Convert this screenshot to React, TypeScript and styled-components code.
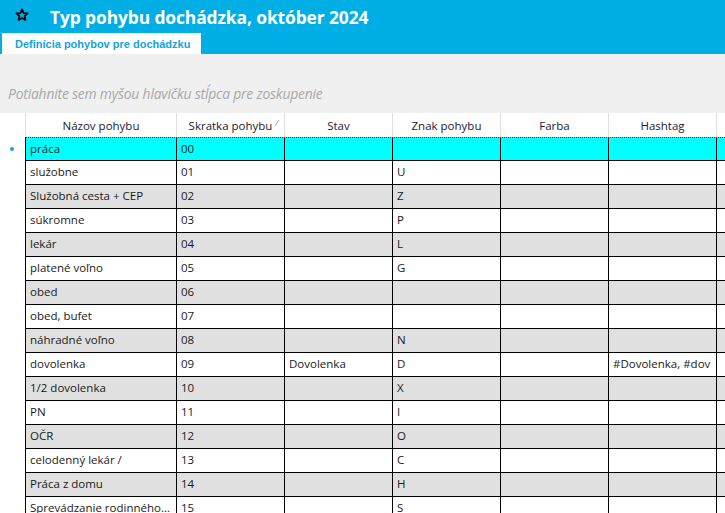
import React from "react";
import styled, { createGlobalStyle } from "styled-components";

const GlobalStyle = createGlobalStyle`
  html, body {
    margin: 0;
    padding: 0;
    background: #ffffff;
    overflow: hidden;
  }
  body {
    font-family: "Open Sans", "Noto Sans", sans-serif;
  }
`;

interface RowData {
  name: string;
  code: string;
  state?: string;
  sign?: string;
  color?: string;
  hashtag?: string;
}

const rows: RowData[] = [
  { name: "práca", code: "00" },
  { name: "služobne", code: "01", sign: "U" },
  { name: "Služobná cesta + CEP", code: "02", sign: "Z" },
  { name: "súkromne", code: "03", sign: "P" },
  { name: "lekár", code: "04", sign: "L" },
  { name: "platené voľno", code: "05", sign: "G" },
  { name: "obed", code: "06" },
  { name: "obed, bufet", code: "07" },
  { name: "náhradné voľno", code: "08", sign: "N" },
  { name: "dovolenka", code: "09", state: "Dovolenka", sign: "D", hashtag: "#Dovolenka, #dov" },
  { name: "1/2 dovolenka", code: "10", sign: "X" },
  { name: "PN", code: "11", sign: "I" },
  { name: "OČR", code: "12", sign: "O" },
  { name: "celodenný lekár /", code: "13", sign: "C" },
  { name: "Práca z domu", code: "14", sign: "H" },
  { name: "Sprevádzanie  rodinného príslušníka", code: "15", sign: "S" },
];

const columns = [
  { title: "Názov pohybu", width: 151 },
  { title: "Skratka pohybu", width: 108, sorted: true },
  { title: "Stav", width: 108 },
  { title: "Znak pohybu", width: 108 },
  { title: "Farba", width: 108 },
  { title: "Hashtag", width: 108 },
  { title: "", width: 108 },
];

const StarIcon = () => (
  <svg width="14" height="14" viewBox="0 0 24 24">
    <path
      d="M12 2.5l2.8 6.2 6.7.6-5.1 4.5 1.5 6.6L12 17l-5.9 3.4 1.5-6.6-5.1-4.5 6.7-.6z"
      fill="none"
      stroke="#000"
      strokeWidth="3"
      strokeLinejoin="round"
    />
  </svg>
);

const App = () => {
  return (
    <Page>
      <GlobalStyle />
      <TitleBar>
        <StarBox>
          <StarIcon />
        </StarBox>
        <Title>Typ pohybu dochádzka, október 2024</Title>
      </TitleBar>
      <TabStrip>
        <Tab>Definícia pohybov pre dochádzku</Tab>
      </TabStrip>
      <GroupPanel>
        <GroupHint>Potiahnite sem myšou hlavičku stĺpca pre zoskupenie</GroupHint>
      </GroupPanel>
      <Grid>
        <HeaderRow>
          <IndicatorCell />
          {columns.map((col, i) => (
            <HeaderCell key={i} $width={col.width}>
              {col.title}
              {col.sorted && (
                <SortMark width="6" height="8" viewBox="0 0 6 8">
                  <line x1="1" y1="7" x2="5" y2="1" stroke="#b0b0b0" strokeWidth="1" />
                </SortMark>
              )}
            </HeaderCell>
          ))}
        </HeaderRow>
        {rows.map((row, index) => {
          const values = [row.name, row.code, row.state, row.sign, row.color, row.hashtag, ""];
          return (
            <Row key={index} $selected={index === 0} $shade={index % 2 === 0}>
              <IndicatorCell>{index === 0 && <Dot />}</IndicatorCell>
              {columns.map((col, i) => (
                <Cell key={i} $width={col.width}>
                  {values[i]}
                </Cell>
              ))}
            </Row>
          );
        })}
      </Grid>
    </Page>
  );
};

export default App;

const Page = styled.div`
  width: 725px;
  height: 513px;
  overflow: hidden;
  background: #ffffff;
`;

const TitleBar = styled.div`
  height: 33px;
  background: #00aee6;
  display: flex;
  align-items: center;
`;

const StarBox = styled.div`
  width: 50px;
  display: flex;
  justify-content: center;
  padding-right: 6px;
  box-sizing: border-box;
  margin-top: -4px;
`;

const Title = styled.h1`
  margin: 0;
  color: #ffffff;
  font-family: "Open Sans", sans-serif;
  font-weight: 700;
  font-size: 17.4px;
  letter-spacing: -0.1px;
`;

const TabStrip = styled.div`
  height: 21px;
  background: #00aee6;
  padding-left: 2px;
  display: flex;
`;

const Tab = styled.div`
  width: 199px;
  background: #ffffff;
  color: #11a5dc;
  font-family: "Liberation Sans", Arial, sans-serif;
  font-weight: 700;
  font-size: 11px;
  padding-left: 13px;
  padding-top: 3px;
  box-sizing: border-box;
  line-height: 17px;
`;

const GroupPanel = styled.div`
  height: 59px;
  background: #f0f0f0;
  display: flex;
  align-items: flex-end;
  padding: 0 8px 10px;
  box-sizing: border-box;
`;

const GroupHint = styled.span`
  font-style: italic;
  font-size: 13.9px;
  color: #a8a8a8;
  font-family: "Open Sans", sans-serif;
  letter-spacing: -0.2px;
`;

const Grid = styled.div`
  display: flex;
  flex-direction: column;
  font-size: 11.5px;
  color: #1a1a1a;
`;

const HeaderRow = styled.div`
  display: flex;
  height: 24px;
  background: #ffffff;
`;

const IndicatorCell = styled.div`
  width: 26px;
  flex: none;
  display: flex;
  align-items: center;
  justify-content: center;
  border-right: 1px solid #e0e0e0;
  box-sizing: border-box;
`;

const HeaderCell = styled.div<{ $width: number }>`
  width: ${(p) => p.$width}px;
  flex: none;
  box-sizing: border-box;
  border-right: 1px solid #e0e0e0;
  display: flex;
  align-items: center;
  justify-content: center;
  position: relative;
  color: #1e1830;
`;

const SortMark = styled.svg`
  position: absolute;
  right: 4px;
  top: 6px;
`;

const Row = styled.div<{ $selected: boolean; $shade: boolean }>`
  display: flex;
  height: 24px;
  box-sizing: border-box;
  border-top: ${(p) => (p.$selected ? "1px dotted #e00000" : "1px solid #000")};
  border-bottom: ${(p) => (p.$selected ? "1px dotted #e00000" : "none")};
  margin-bottom: ${(p) => (p.$selected ? "-1px" : "0")};
  background: ${(p) => (p.$selected ? "#00ffff" : p.$shade ? "#e0e0e0" : "#ffffff")};

  & > div:first-child {
    background: #ffffff;
    border-right: 1px solid #000;
    margin-top: -1px;
    margin-bottom: -1px;
  }
`;

const Cell = styled.div<{ $width: number }>`
  width: ${(p) => p.$width}px;
  flex: none;
  box-sizing: border-box;
  border-right: 1px solid #000;
  padding: 0 4px;
  white-space: nowrap;
  overflow: hidden;
  text-overflow: ellipsis;
  display: block;
  line-height: 22px;
`;

const Dot = styled.span`
  width: 4px;
  height: 4px;
  border-radius: 50%;
  background: #1e9be0;
  margin-left: -1px;
`;
